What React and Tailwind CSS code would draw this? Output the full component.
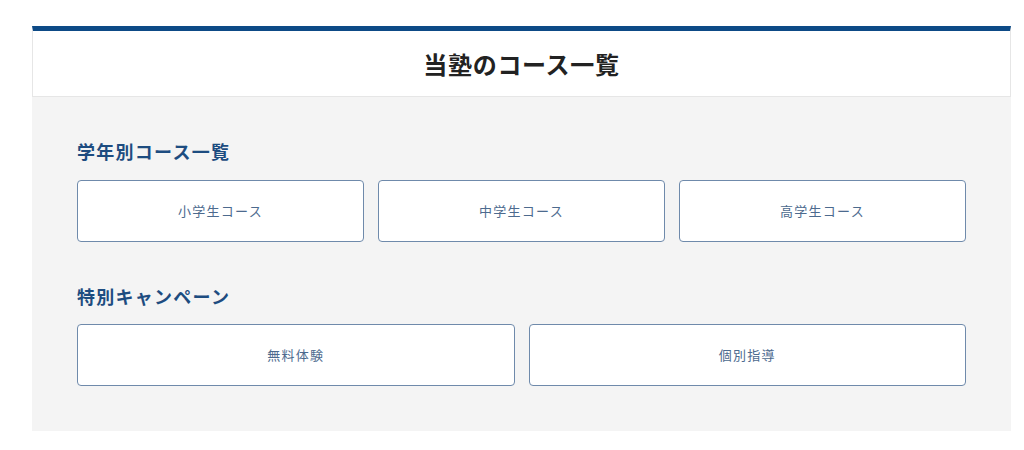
import React from 'react';

const font = { fontFamily: '"Noto Sans CJK JP", "Noto Sans", sans-serif' };

function CourseButton({ label }) {
  return (
    <a
      href="#"
      className="flex h-[62px] items-center justify-center rounded-[4px] border border-[#6f8aab] bg-white text-[13px] tracking-[0.1em] text-[#4c6a8e]"
    >
      {label}
    </a>
  );
}

export default function App() {
  const grades = ['小学生コース', '中学生コース', '高学生コース'];
  const campaigns = ['無料体験', '個別指導'];

  return (
    <div className="min-h-[450px] bg-white pt-[26px]" style={font}>
      <div className="ml-[32px] w-[979px]">
        {/* 見出し */}
        <div className="flex h-[71px] items-center justify-center border-t-[5px] border-x border-b border-t-[#0d4a86] border-x-[#e6e6e6] border-b-[#e6e6e6] bg-white">
          <h1 className="text-[24px] font-bold tracking-[0.03em] text-[#222]">当塾のコース一覧</h1>
        </div>

        <div className="bg-[#f4f4f4] px-[45px] pt-[41px] pb-[45px]">
          <h2 className="mb-[16px] text-[18px] font-bold leading-[26px] tracking-[0.07em] text-[#1d4c80]">学年別コース一覧</h2>
          <div className="grid grid-cols-3 gap-[14px]">
            {grades.map((g) => (
              <CourseButton key={g} label={g} />
            ))}
          </div>

          <h2 className="mt-[41px] mb-[15px] text-[18px] font-bold leading-[26px] tracking-[0.07em] text-[#1d4c80]">特別キャンペーン</h2>
          <div className="grid grid-cols-2 gap-[14px]">
            {campaigns.map((c) => (
              <CourseButton key={c} label={c} />
            ))}
          </div>
        </div>
      </div>
    </div>
  );
}
